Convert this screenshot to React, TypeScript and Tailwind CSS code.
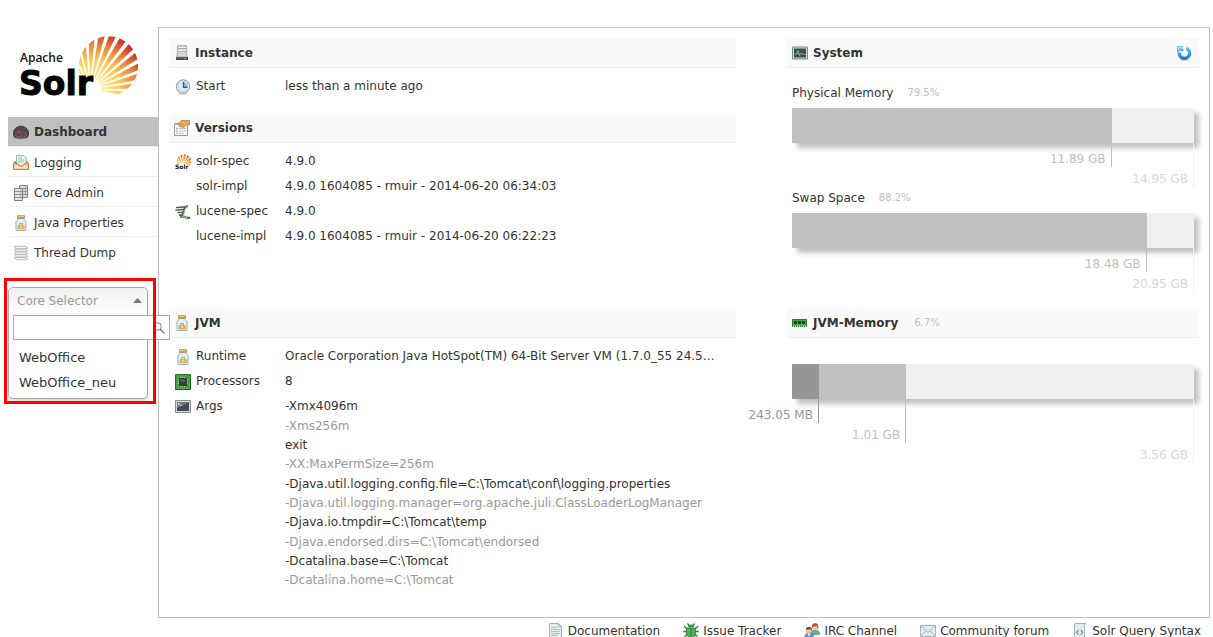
import type { ReactNode } from "react";

type IconProps = { children: ReactNode };

function Icon({ children }: IconProps) {
  return (
    <svg viewBox="0 0 16 16" className="size-4 shrink-0" aria-hidden="true">
      {children}
    </svg>
  );
}

const GaugeIcon = () => (
  <Icon>
    <path d="M1.8 13.6C.2 11.500 0 8.600 1.200 6.300 2.600 3.600 5 2.200 8 2.200s5.400 1.400 6.800 4.100c1.200 2.300 1 5.200-.6 7.300-3.800.8-8.600.8-12.400 0z" fill="#4a4d50" stroke="#2d2f31" strokeWidth=".8" />
    <path d="M2.800 11.500a5.300 5.300 0 0 1 10.400 0" fill="none" stroke="#9a9d9f" strokeWidth="1" strokeDasharray=".8 1.900" />
    <path d="M3 13h10" stroke="#77797b" />
    <path d="M4.500 6.500l6 5.500" stroke="#f0262b" strokeWidth="1.500" />
    <circle cx="10.600" cy="12" r="1" fill="#b31217" />
  </Icon>
);

const InboxIcon = () => (
  <Icon>
    <path d="M3.500.500h7.500l2 2V11h-9.500z" fill="#e9f4f4" stroke="#8fb5b5" />
    <path d="M5 3h4M5 5h6M5 7h6" stroke="#8fbcbc" />
    <path d="M.500 8L2.500 6v3l2.500 0 1 2h4l1-2h2.500V6l2 2v6.500h-15z" fill="#f3bb84" stroke="#c87d3c" />
    <path d="M1.500 10H5l1 1.700h4l1-1.700h3.500v3.700h-13z" fill="#fbe0c1" />
  </Icon>
);

const ServersIcon = () => (
  <Icon>
    <path d="M6.500.500h8v12h-8z" fill="#d7dad9" stroke="#85898a" />
    <path d="M7 3.500h7M7 6.500h7M7 9.500h7" stroke="#8c9091" />
    <path d="M1.500 3.500h8v12h-8z" fill="#e4e6e5" stroke="#7c8081" />
    <path d="M2 6.500h7M2 9.500h7M2 12.500h7" stroke="#8c9091" />
    <path d="M7 5h1M7 8h1M7 11h1M12 2h1M12 5h1M12 8h1" stroke="#51a351" />
  </Icon>
);

const JarIcon = () => (
  <Icon>
    <path d="M5 3.500h6l.5 1.500 1.500 1.500v8q0 1-1 1H4q-1 0-1-1v-8L4.500 5z" fill="#e3f0f8" stroke="#8db4cc" />
    <path d="M4.500.700h7v2.500h-7z" fill="#dba942" stroke="#b17c22" strokeWidth=".7" />
    <path d="M5 1.500h6" stroke="#f7dd92" strokeWidth=".7" />
    <path d="M6.500 8.500h3v2.300h1.700v3H5v-3h1.500z" fill="#e9bf5e" stroke="#c38f30" strokeWidth=".7" />
    <path d="M8 11v2.500M6.800 9.500h2" stroke="#fbeab7" strokeWidth=".7" />
    <path d="M2.500 15.500h11" stroke="#aaa" strokeWidth=".6" />
  </Icon>
);

const StackIcon = () => (
  <Icon>
    {[12.500, 9.700, 6.900, 4.100, 1.300].map((y) => (
      <path key={y} d={`M1.300 ${y}h10.700q1.700.2 2.700 1.900-1.500.5-3 .4H3.300z`} fill="#f7f7f7" stroke="#a0a0a0" strokeWidth=".7" />
    ))}
  </Icon>
);

const ServerIcon = () => (
  <Icon>
    <path d="M3.500.700h9l.5 11.300H3z" fill="#d8d8d8" stroke="#999" strokeWidth=".8" />
    <path d="M4 3.500h8M4 6.500h8" stroke="#a9a9a9" strokeWidth=".9" />
    <path d="M4 2.500h8M4 5.500h8" stroke="#f2f2f2" />
    <path d="M2 12h12v3H2z" fill="#4b4d4b" />
    <path d="M3 12.700h10" stroke="#8b8d8b" strokeWidth=".6" />
    <path d="M10 13.700h2" stroke="#5ec05e" />
  </Icon>
);

const ClockIcon = () => (
  <Icon>
    <ellipse cx="8" cy="14.700" rx="5" ry=".8" fill="#ccc" />
    <circle cx="8" cy="7.500" r="6.600" fill="#fff" stroke="#9aa1ab" strokeWidth="1.200" />
    <circle cx="8" cy="7.500" r="4.900" fill="#dfeafa" stroke="#b5c2d2" strokeWidth=".7" />
    <path d="M8 2.700a4.900 4.900 0 0 1 4.800 4.800H8z" fill="#9cbcf0" />
    <path d="M8.500 3v5.300h4" fill="none" stroke="#2c55b8" strokeWidth="1.400" />
  </Icon>
);

const FormIcon = () => (
  <Icon>
    <path d="M.5 3.500h13v12H.5z" fill="#f8f8f8" stroke="#999" />
    <path d="M1 4.500h12" stroke="#c9c9c9" />
    <path d="M5 8.500h7M5 11h7M5 13.300h5" stroke="#aaa" strokeWidth=".7" />
    <path d="M2.500 8.500h1" stroke="#4b74d8" strokeWidth="1.400" />
    <path d="M2.500 11h1" stroke="#e05555" strokeWidth="1.400" />
    <path d="M2.500 13.300h1" stroke="#55b055" strokeWidth="1.400" />
    <path d="M15.700.5h-5L7 .7 3.500 4.300l1.500.7 2-1-1.700 2.500 1.500.5L9 5 8 7.200l1.500.3 2-2 4.200-.8z" fill="#e9a960" stroke="#b3722b" strokeWidth=".7" />
  </Icon>
);

type SunProps = { cx: number; cy: number; reach: number; start: number; end: number; rays: number; inner: number };

function SunRays({ cx, cy, reach, start, end, rays, inner }: SunProps) {
  const step = (end - start) / (rays - 1);
  const point = (angle: number, radius: number) => {
    const a = (angle * Math.PI) / 180;
    return `${cx + Math.cos(a) * radius} ${cy - Math.sin(a) * radius}`;
  };
  return (
    <>
      {Array.from({ length: rays }, (_, i) => {
        const mid = start + i * step;
        const half = step * 0.31;
        return (
          <path
            key={i}
            d={`M${point(mid - half, inner)}L${point(mid - half, reach)}L${point(mid + half, reach)}L${point(mid + half, inner)}Z`}
          />
        );
      })}
    </>
  );
}

const SolrIcon = () => (
  <Icon>
    <defs>
      <clipPath id="mini-sun"><circle cx="9" cy="7.500" r="7.300" /></clipPath>
      <radialGradient id="mini-glow" gradientUnits="userSpaceOnUse" cx="7" cy="11" r="14">
        <stop offset=".2" stopColor="#fbd66f" />
        <stop offset=".6" stopColor="#ec8a35" />
        <stop offset="1" stopColor="#c9302c" />
      </radialGradient>
    </defs>
    <g clipPath="url(#mini-sun)" fill="url(#mini-glow)">
      <SunRays cx={8} cy={11} reach={20} start={0} end={160} rays={9} inner={2} />
    </g>
    <text x="0" y="15" fontSize="6" fontWeight="700" fontFamily="DejaVu Sans, sans-serif" fill="#111" stroke="#fff" strokeWidth="1" paintOrder="stroke">Solr</text>
  </Icon>
);

const LuceneIcon = () => (
  <Icon>
    <path d="M1 3.500c3 .3 5-.8 9-.5M.5 6c3 .5 5-.8 8-.5M2.500 8.500c2 .3 3-.6 5-.4M4 11c1.500.2 2-.4 3-.3" fill="none" stroke="#4d5a4f" strokeWidth="1.400" />
    <path d="M13 2.500C11 2 9.500 4 8.800 7S7 12 5.500 12.800c2-.2 3.500-.7 5 .3s2.500 1 4.500.5" fill="none" stroke="#4c6a50" strokeWidth="2.200" />
    <path d="M12.500 3.200C11 3 10 5 9.500 7.500S8.500 11.500 7.500 12.600c2-.2 3 .9 4.500 1" fill="none" stroke="#a5d2a3" strokeWidth="1" />
  </Icon>
);

const ChipIcon = () => (
  <Icon>
    <path d="M.5.500h15v15H.5z" fill="#3c9a3c" stroke="#256f28" />
    <path d="M2 2h12v12H2z" fill="none" stroke="#7ccf70" strokeWidth=".7" strokeDasharray="1 1" />
    <path d="M3 5.500h10M3 7.500h10M3 9.500h10M5.500 3v10M7.500 3v10M9.500 3v10" stroke="#d7e8b7" strokeWidth=".7" />
    <path d="M4 4h8v8H4z" fill="#3b3b3f" />
    <path d="M5 5h5v3H5z" fill="#55555b" />
  </Icon>
);

const TerminalIcon = () => (
  <Icon>
    <path d="M.5 1.500h15v12H.5z" fill="#d9d9d9" stroke="#8d8d8d" />
    <path d="M2 3h12v9H2z" fill="#454a59" />
    <path d="M2 3h12L2 9z" fill="#72788a" />
    <path d="M3 4l1.500 1L3 6M5 6.500h2" fill="none" stroke="#fff" strokeWidth=".8" />
  </Icon>
);

const MonitorIcon = () => (
  <Icon>
    <path d="M.5 2h15v12H.5z" fill="#d2d2d2" stroke="#858585" />
    <path d="M2 3.500h12v9H2z" fill="#484b4d" />
    <path d="M2 9h3l1-3.500 1.300 5L8.500 8l1 1.500L11 8.500l1 1h2" fill="none" stroke="#3edba8" strokeWidth=".9" />
  </Icon>
);

const RefreshIcon = () => (
  <Icon>
    <defs>
      <linearGradient id="refresh-blue" gradientUnits="userSpaceOnUse" x1="0" y1="1" x2="0" y2="15">
        <stop offset="0" stopColor="#7cc6f2" />
        <stop offset=".5" stopColor="#3fa4e8" />
        <stop offset="1" stopColor="#1272c8" />
      </linearGradient>
    </defs>
    <ellipse cx="8.500" cy="15" rx="5" ry=".7" fill="#ccc" />
    <path d="M10.300 3.300A5.200 5.200 0 1 1 3.300 7.500" fill="none" stroke="url(#refresh-blue)" strokeWidth="3.400" />
    <path d="M1 1h6.500L5.800 2.800l2.200 2.200-1.500 1.600L4.200 5.500 1 7.500z" fill="url(#refresh-blue)" />
    <path d="M2 1.900h3.500L2 5.300z" fill="#b9e2f9" />
  </Icon>
);

const RamIcon = () => (
  <Icon>
    <path d="M.5 4.500h14v7H.5z" fill="#46a546" stroke="#287c2b" />
    <path d="M2 6h3v3H2zM6 6h3v3H6zM10 6h3v3h-3z" fill="#29402b" />
    <path d="M1 11.300h13" stroke="#e3d56a" strokeWidth="1.600" strokeDasharray="1 1" />
  </Icon>
);

const DocumentIcon = () => (
  <Icon>
    <path d="M1.500.500h9l3 3v12h-12z" fill="#e1eded" stroke="#9db7b7" />
    <path d="M10.500.500v3h3z" fill="#fff" stroke="#8fadad" strokeWidth=".8" />
    <path d="M3 4.500h6M3 6.500h9M3 8.500h9M3 10.500h9M3 12.500h7" stroke="#a8c0c0" strokeWidth=".9" />
  </Icon>
);

const BugIcon = () => (
  <Icon>
    <path d="M4.500.500l2 2.500M11.500.500L9.500 3M1 3l3.500 3.500M15 3l-3.500 3.500M.300 8.500H4M15.700 8.500H12M1.500 13.500L4.500 11M14.500 13.500L11.500 11" stroke="#2e7d39" strokeWidth="1.300" />
    <path d="M4.800 4.500C4.800 2.500 6.300 1.500 8 1.500s3.200 1 3.200 3z" fill="#3c9548" />
    <path d="M3.800 5h8.400c.9 5 .2 9-4.200 10.700C3.600 14 2.900 10 3.800 5z" fill="#4fae57" stroke="#2a7836" strokeWidth=".8" />
    <path d="M8 5.500V15" stroke="#2a7836" strokeWidth=".8" />
  </Icon>
);

const UsersIcon = () => (
  <Icon>
    <path d="M6.800 10c.2-2.200 1.700-3 4.200-3s4.500 1 4.500 4.500H8z" fill="#63b584" stroke="#3a8a5b" strokeWidth=".6" />
    <circle cx="11" cy="4" r="2.600" fill="#f6caa0" />
    <path d="M8 6.500C7.500 2 8.500.3 11 .3s4 1.500 3.200 6.200C13 6 13.500 4 12.500 2.800 11 3.800 9 3.500 9 3.500z" fill="#b5552b" />
    <path d="M.500 15.500C.500 12 2 10.300 5 10.300s4.800 1.700 4.800 5.200z" fill="#5d9be0" stroke="#3468a8" strokeWidth=".6" />
    <path d="M3.500 10.500L5 13.500l1.500-3z" fill="#fff" />
    <circle cx="5" cy="7.500" r="2.800" fill="#f6caa0" stroke="#c98b58" strokeWidth=".4" />
    <path d="M2 7.300C1.800 4.500 3.300 4 5 4s3.300.8 3 3.300C7 6.500 6.500 6.300 5.500 6.500S3 6.200 2 7.300z" fill="#7a4426" />
  </Icon>
);

const MailIcon = () => (
  <Icon>
    <path d="M.5 2.500h15v11H.5z" fill="#e1eded" stroke="#9db4b4" />
    <path d="M1 3l7 6.500L15 3M1 13l5-5M15 13l-5-5" fill="none" stroke="#9bb5b5" strokeWidth=".9" />
  </Icon>
);

const ScriptIcon = () => (
  <Icon>
    <path d="M2.500 2Q2.500.500 4 .500h10q-1.500.5-1.500 2v11.500q0 1.500-1.500 1.500H1.500q1-.5 1-2z" fill="#e1ecee" stroke="#93aaae" strokeWidth=".9" />
    <path d="M6.500 7l-2 2.300 2 2.300M8.800 7l2 2.300-2 2.300" fill="none" stroke="#555" />
  </Icon>
);

function Logo() {
  return (
    <svg viewBox="0 0 120 70" className="ml-3 h-[70px] w-[120px]" role="img" aria-label="Apache Solr">
      <defs>
        <clipPath id="sun-disc"><circle cx="88.500" cy="34" r="29.700" /></clipPath>
        <radialGradient id="sun-glow" gradientUnits="userSpaceOnUse" cx="70" cy="58" r="60">
          <stop offset=".25" stopColor="#ffeb98" />
          <stop offset=".5" stopColor="#fbca5e" />
          <stop offset=".75" stopColor="#ec8538" />
          <stop offset="1" stopColor="#c42a2b" />
        </radialGradient>
      </defs>
      <g clipPath="url(#sun-disc)" fill="url(#sun-glow)">
        <SunRays cx={70} cy={57} reach={80} start={-7} end={120} rays={13} inner={11} />
      </g>
      <text x="0" y="30" fontSize="12" fontWeight="600" fontFamily="Open Sans, sans-serif" fill="#111">Apache</text>
      <text x="-1" y="63" fontSize="33" fontWeight="700" fontFamily="DejaVu Sans, sans-serif" fill="#000" stroke="#000" strokeWidth=".9">Solr</text>
    </svg>
  );
}

const navItems = [
  { label: "Logging", icon: <InboxIcon /> },
  { label: "Core Admin", icon: <ServersIcon /> },
  { label: "Java Properties", icon: <JarIcon /> },
  { label: "Thread Dump", icon: <StackIcon /> },
];

function Sidebar() {
  return (
    <aside className="relative z-10 w-[150px] shrink-0 pt-[5px]">
      <Logo />
      <nav className="mt-[15px]">
        <a href="#dashboard" aria-current="page" className="flex h-[30px] items-center gap-[5px] border-b border-[#f0f0f0] bg-[#c0c0c0] pl-[5px] font-bold">
          <GaugeIcon />
          Dashboard
        </a>
        {navItems.map((item) => (
          <a key={item.label} href="#nav" className="flex h-[30px] items-center gap-[5px] border-b border-[#f0f0f0] pt-[2px] pl-[5px] last:border-b-0">
            {item.icon}
            {item.label}
          </a>
        ))}
      </nav>
      <CoreSelector />
    </aside>
  );
}

function CoreSelector() {
  return (
    <div className="relative mt-5 mr-[10px] rounded-[5px] border border-[#aaa] bg-white pb-[3px] shadow-[0_3px_4px_rgba(0,0,0,0.15)]">
      <button type="button" aria-expanded="true" className="flex h-[27px] w-full items-center justify-between rounded-t-[5px] bg-linear-to-b from-[#f0f0f0] to-white pr-[5px] pb-[2px] pl-2 text-[#999]">
        Core Selector
        <svg viewBox="0 0 9 5" className="h-[5px] w-[9px]" aria-hidden="true"><path d="M0 5L4.500 0 9 5z" fill="#777" /></svg>
      </button>
      <label className="ml-1 flex h-[25px] w-[157px] items-center border border-[#aaa] bg-white pr-1">
        <input type="text" aria-label="Search cores" className="h-full min-w-0 flex-1 px-1 outline-none" />
        <svg viewBox="0 0 12 12" className="size-3 shrink-0" fill="none" stroke="#777" aria-hidden="true">
          <circle cx="4.500" cy="4.500" r="3.800" />
          <path d="M7.300 7.300L11.500 11.500" strokeWidth="1.300" />
        </svg>
      </label>
      <ul className="pt-[5px] pl-[10px] text-[13px] leading-[25px]">
        <li><a href="#weboffice">WebOffice</a></li>
        <li><a href="#weboffice-neu">WebOffice_neu</a></li>
      </ul>
      <div className="pointer-events-none absolute -top-[10px] -right-[9px] -bottom-[6px] -left-[5px] border-3 border-[#f00]" />
    </div>
  );
}

type SectionHeaderProps = { icon: ReactNode; title: string; percent?: string; action?: ReactNode };

function SectionHeader({ icon, title, percent, action }: SectionHeaderProps) {
  return (
    <h2 className="flex h-[30px] items-center gap-[5px] border-b border-[#f0f0f0] bg-[#fafafa] px-[5px] font-bold">
      {icon}
      {title}
      {percent && <small className="ml-[11px] text-[10px] font-normal text-[#c0c0c0]">{percent}</small>}
      {action}
    </h2>
  );
}

type RowProps = { icon?: ReactNode; label: string; children: ReactNode };

function Row({ icon, label, children }: RowProps) {
  return (
    <div className="flex leading-[25px]">
      <dt className="flex w-[110px] shrink-0 items-start gap-[5px]">
        <span className="flex h-[25px] w-4 items-center">{icon}</span>
        {label}
      </dt>
      <dd className="min-w-0 flex-1 truncate">{children}</dd>
    </div>
  );
}

const jvmArgs = [
  "-Xmx4096m",
  "-Xms256m",
  "exit",
  "-XX:MaxPermSize=256m",
  "-Djava.util.logging.config.file=C:\\Tomcat\\conf\\logging.properties",
  "-Djava.util.logging.manager=org.apache.juli.ClassLoaderLogManager",
  "-Djava.io.tmpdir=C:\\Tomcat\\temp",
  "-Djava.endorsed.dirs=C:\\Tomcat\\endorsed",
  "-Dcatalina.base=C:\\Tomcat",
  "-Dcatalina.home=C:\\Tomcat",
];

type Level = { label: string; share: number; bar: string; mark: string };

const FREE = { bar: "bg-[#f0f0f0]", mark: "h-11 border-[#f0f0f0] text-[#d8d8d8]" };
const USED = { bar: "bg-[#c0c0c0]", mark: "h-6 border-[#c0c0c0] text-[#c0c0c0]" };

function MemoryBar({ levels }: { levels: Level[] }) {
  return (
    <div className="px-[5px]">
      <div className="grid h-[35px] shadow-[5px_5px_5px_#c0c0c0]">
        {levels.map((level) => (
          <div key={level.label} className={`col-start-1 row-start-1 ${level.bar}`} style={{ width: `${level.share}%` }} />
        ))}
      </div>
      <div className="relative grid">
        {levels.map((level) => (
          <div
            key={level.label}
            className={`col-start-1 row-start-1 flex items-end justify-end border-r pr-[5px] leading-4 whitespace-nowrap ${level.mark}`}
            style={{ width: `${level.share}%` }}
          >
            {level.label}
          </div>
        ))}
      </div>
    </div>
  );
}

function MemoryLabel({ name, percent }: { name: string; percent: string }) {
  return (
    <h3 className="flex items-center gap-[14px] pb-[7px] pl-[5px]">
      {name}
      <small className="text-[10px] text-[#c0c0c0]">{percent}</small>
    </h3>
  );
}

const footerLinks = [
  { label: "Documentation", icon: <DocumentIcon /> },
  { label: "Issue Tracker", icon: <BugIcon /> },
  { label: "IRC Channel", icon: <UsersIcon /> },
  { label: "Community forum", icon: <MailIcon /> },
  { label: "Solr Query Syntax", icon: <ScriptIcon /> },
];

export default function App() {
  return (
    <div className="min-h-screen overflow-hidden bg-white pt-[27px] pr-[3px] pl-2 font-['DejaVu_Sans',Verdana,sans-serif] text-[12px] leading-4 text-[#333]">
      <div className="flex">
        <Sidebar />
        <main className="grid min-w-0 flex-1 grid-cols-[55fr_5fr_40fr] content-start border border-[#c0c0c0] px-[10px] pt-[10px] pb-[27px]">
          <div className="min-w-0">
            <section className="pb-[14px]">
              <SectionHeader icon={<ServerIcon />} title="Instance" />
              <dl className="pt-[6px] pl-[6px]">
                <Row icon={<ClockIcon />} label="Start">less than a minute ago</Row>
              </dl>
            </section>
            <section>
              <SectionHeader icon={<FormIcon />} title="Versions" />
              <dl className="pt-[6px] pl-[6px]">
                <Row icon={<SolrIcon />} label="solr-spec">4.9.0</Row>
                <Row label="solr-impl">4.9.0 1604085 - rmuir - 2014-06-20 06:34:03</Row>
                <Row icon={<LuceneIcon />} label="lucene-spec">4.9.0</Row>
                <Row label="lucene-impl">4.9.0 1604085 - rmuir - 2014-06-20 06:22:23</Row>
              </dl>
            </section>
          </div>

          <section className="col-start-3 min-w-0 pb-4">
            <SectionHeader
              icon={<MonitorIcon />}
              title="System"
              action={<button type="button" aria-label="Refresh" className="mr-[2px] ml-auto"><RefreshIcon /></button>}
            />
            <div className="flex flex-col gap-[3px] pt-[17px]">
              <div>
                <MemoryLabel name="Physical Memory" percent="79.5%" />
                <MemoryBar levels={[{ label: "14.95 GB", share: 100, ...FREE }, { label: "11.89 GB", share: 79.5, ...USED }]} />
              </div>
              <div>
                <MemoryLabel name="Swap Space" percent="88.2%" />
                <MemoryBar levels={[{ label: "20.95 GB", share: 100, ...FREE }, { label: "18.48 GB", share: 88.2, ...USED }]} />
              </div>
            </div>
          </section>

          <section className="min-w-0">
            <SectionHeader icon={<JarIcon />} title="JVM" />
            <dl className="pt-[6px] pl-[6px]">
              <Row icon={<JarIcon />} label="Runtime">Oracle Corporation Java HotSpot(TM) 64-Bit Server VM (1.7.0_55 24.5…</Row>
              <Row icon={<ChipIcon />} label="Processors">8</Row>
              <Row icon={<TerminalIcon />} label="Args">
                <ul className="pt-[3px] leading-[19px]">
                  {jvmArgs.map((arg) => (
                    <li key={arg} className="even:text-[#999] nth-[3n+2]:leading-5">{arg}</li>
                  ))}
                </ul>
              </Row>
            </dl>
          </section>

          <section className="col-start-3 min-w-0">
            <SectionHeader icon={<RamIcon />} title="JVM-Memory" percent="6.7%" />
            <div className="pt-[26px]">
              <MemoryBar
                levels={[
                  { label: "3.56 GB", share: 100, bar: "bg-[#f0f0f0]", mark: "h-16 border-[#f0f0f0] text-[#d8d8d8]" },
                  { label: "1.01 GB", share: 28.4, bar: "bg-[#c0c0c0]", mark: "h-11 border-[#c0c0c0] text-[#c0c0c0]" },
                  { label: "243.05 MB", share: 6.7, bar: "bg-[#969696]", mark: "h-6 border-[#969696] text-[#969696]" },
                ]}
              />
            </div>
          </section>
        </main>
      </div>
      <footer className="pt-[5px] pr-[9px]">
        <ul className="flex justify-end gap-[23px]">
          {footerLinks.map((link) => (
            <li key={link.label}>
              <a href="#footer" className="flex items-center gap-1">
                {link.icon}
                {link.label}
              </a>
            </li>
          ))}
        </ul>
      </footer>
    </div>
  );
}
